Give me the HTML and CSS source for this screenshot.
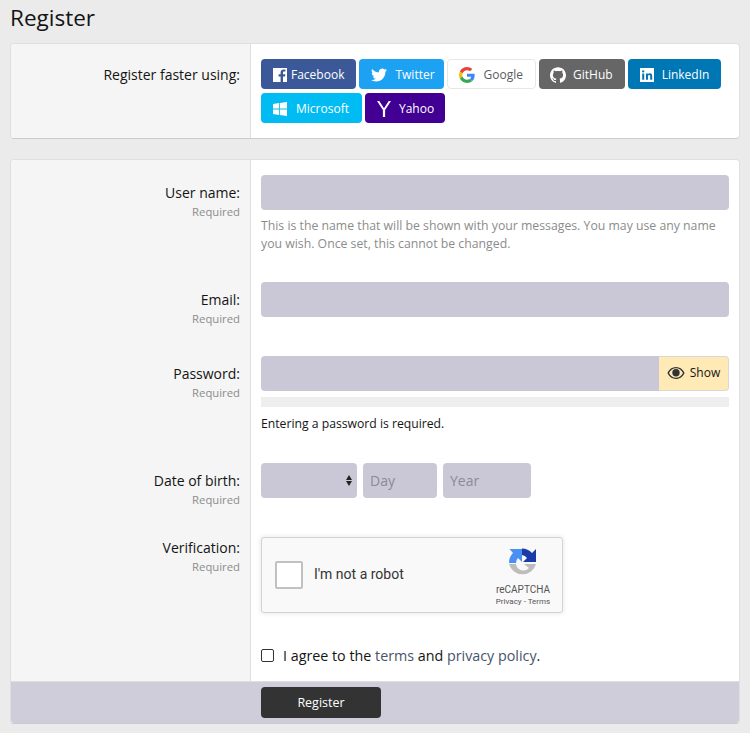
FILE: index.html
```html
<!DOCTYPE html>
<html lang="en">
<head>
  <meta charset="UTF-8">
  <title>Register</title>
  <link rel="stylesheet" href="styles.css">
</head>
<body>
  <h1 class="page-title">Register</h1>

  <div class="block block-auth">
    <div class="row">
      <div class="row-label"><span class="label-text">Register faster using:</span></div>
      <div class="row-body">
        <div class="providers">
          <a class="provider facebook" href="#">
            <svg class="provider-icon" viewBox="0 0 16 16"><path fill="#fff" d="M1 1h14v14h-4V9.6h2l.3-2.4H11V5.8c0-.7.2-1.2 1.2-1.2h1.2V2.5c-.3 0-1-.1-1.800-.1-1.800 0-3 1.100-3 3.100v1.700h-2v2.400h2V15H1z"/></svg>
            Facebook
          </a>
          <a class="provider twitter" href="#">
            <svg class="provider-icon" viewBox="0 0 24 24"><path fill="#fff" d="M23.953 4.57a10 10 0 01-2.825.775 4.958 4.958 0 002.163-2.723c-.951.555-2.005.959-3.127 1.184a4.92 4.92 0 00-8.384 4.482C7.69 8.095 4.067 6.13 1.64 3.162a4.822 4.822 0 00-.666 2.475c0 1.71.87 3.213 2.188 4.096a4.904 4.904 0 01-2.228-.616v.06a4.923 4.923 0 003.946 4.827 4.996 4.996 0 01-2.212.085 4.936 4.936 0 004.604 3.417 9.867 9.867 0 01-6.102 2.105c-.39 0-.779-.023-1.17-.067a13.995 13.995 0 007.557 2.209c9.053 0 13.998-7.496 13.998-13.985 0-.21 0-.42-.015-.63A9.935 9.935 0 0024 4.59z"/></svg>
            Twitter
          </a>
          <a class="provider google" href="#">
            <svg class="provider-icon" viewBox="0 0 48 48">
              <path fill="#EA4335" d="M24 9.5c3.54 0 6.71 1.22 9.21 3.6l6.85-6.85C35.9 2.38 30.47 0 24 0 14.62 0 6.51 5.38 2.56 13.22l7.98 6.19C12.43 13.72 17.74 9.5 24 9.5z"/>
              <path fill="#4285F4" d="M46.98 24.55c0-1.57-.15-3.09-.38-4.55H24v9.02h12.94c-.58 2.96-2.26 5.48-4.78 7.18l7.73 6c4.51-4.18 7.09-10.36 7.09-17.65z"/>
              <path fill="#FBBC05" d="M10.53 28.59c-.48-1.450-.76-2.990-.76-4.590s.27-3.140.76-4.590l-7.980-6.190C.92 16.460 0 20.120 0 24c0 3.880.92 7.540 2.560 10.780l7.970-6.190z"/>
              <path fill="#34A853" d="M24 48c6.48 0 11.93-2.130 15.890-5.810l-7.730-6c-2.150 1.450-4.920 2.300-8.160 2.300-6.260 0-11.570-4.220-13.470-9.910l-7.980 6.190C6.510 42.620 14.620 48 24 48z"/>
            </svg>
            Google
          </a>
          <a class="provider github" href="#">
            <svg class="provider-icon" viewBox="0 0 24 24"><path fill="#fff" d="M12 .297c-6.63 0-12 5.373-12 12 0 5.303 3.438 9.8 8.205 11.385.6.113.82-.258.82-.577 0-.285-.01-1.04-.015-2.04-3.338.724-4.042-1.61-4.042-1.61C4.422 18.07 3.633 17.7 3.633 17.7c-1.087-.744.084-.729.084-.729 1.205.084 1.838 1.236 1.838 1.236 1.07 1.835 2.809 1.305 3.495.998.108-.776.417-1.305.76-1.605-2.665-.3-5.466-1.332-5.466-5.93 0-1.31.465-2.38 1.235-3.22-.135-.303-.54-1.523.105-3.176 0 0 1.005-.322 3.3 1.23.96-.267 1.98-.399 3-.405 1.02.006 2.04.138 3 .405 2.28-1.552 3.285-1.23 3.285-1.23.645 1.653.24 2.873.12 3.176.765.84 1.23 1.91 1.23 3.22 0 4.61-2.805 5.625-5.475 5.92.42.36.81 1.096.81 2.22 0 1.606-.015 2.896-.015 3.286 0 .315.21.69.825.57C20.565 22.092 24 17.592 24 12.297c0-6.627-5.373-12-12-12"/></svg>
            GitHub
          </a>
          <a class="provider linkedin" href="#">
            <svg class="provider-icon" viewBox="0 0 16 16"><path fill="#fff" fill-rule="evenodd" d="M1 1h14v14H1zM3.200 6.500v6.300h2V6.500zM4.200 3.300a1.150 1.150 0 100 2.300 1.150 1.150 0 000-2.300zM7 6.500v6.300h2V9.700c0-.9.300-1.600 1.200-1.600s1 .8 1 1.600v3.100h2V9.300c0-1.900-.7-3-2.400-3-1 0-1.600.5-1.900 1V6.500z"/></svg>
            LinkedIn
          </a>
          <a class="provider microsoft" href="#">
            <svg class="provider-icon" viewBox="0 0 16 16"><path fill="#fff" d="M1 3l6-.9v5.500H1zM7.800 2l7.200-1v6.600H7.800zM1 8.400h6v5.500L1 13zM7.800 8.400H15V15l-7.200-1z"/></svg>
            Microsoft
          </a>
          <a class="provider yahoo" href="#">
            <svg class="provider-icon" viewBox="0 0 16 18"><path fill="#fff" d="M1 1h2.300l4.700 7.200L12.700 1H15L9.100 10v7H6.900v-7z"/></svg>
            Yahoo
          </a>
        </div>
      </div>
    </div>
  </div>

  <form class="block block-form">
    <div class="row">
      <div class="row-label">
        <span class="label-text">User name:</span>
        <span class="label-hint">Required</span>
      </div>
      <div class="row-body">
        <input class="field" type="text">
        <p class="explain">This is the name that will be shown with your messages. You may use any name you wish. Once set, this cannot be changed.</p>
      </div>
    </div>

    <div class="row">
      <div class="row-label">
        <span class="label-text">Email:</span>
        <span class="label-hint">Required</span>
      </div>
      <div class="row-body row-email">
        <input class="field" type="email">
      </div>
    </div>

    <div class="row">
      <div class="row-label">
        <span class="label-text">Password:</span>
        <span class="label-hint">Required</span>
      </div>
      <div class="row-body">
        <div class="input-group">
          <input class="field field-group" type="password">
          <button class="show-btn" type="button">
            <svg class="eye" viewBox="0 0 18 14"><path fill="#333" fill-rule="evenodd" d="M9 1C5.200 1 2.100 3.200.4 7c1.700 3.800 4.800 6 8.600 6s6.900-2.200 8.600-6C15.900 3.200 12.800 1 9 1zM9 2.300c3 0 5.500 1.700 7 4.700-1.500 3-4 4.700-7 4.700S3.500 10 2 7c1.500-3 4-4.700 7-4.700z"/><circle cx="9" cy="6.800" r="3.700" fill="#333"/></svg>
            Show
          </button>
        </div>
        <div class="meter"></div>
        <p class="meter-text">Entering a password is required.</p>
      </div>
    </div>

    <div class="row">
      <div class="row-label">
        <span class="label-text">Date of birth:</span>
        <span class="label-hint">Required</span>
      </div>
      <div class="row-body">
        <div class="dob">
          <div class="select-wrap"><select class="field"><option></option></select></div>
          <input class="field dob-day" type="text" placeholder="Day">
          <input class="field dob-year" type="text" placeholder="Year">
        </div>
      </div>
    </div>

    <div class="row">
      <div class="row-label">
        <span class="label-text">Verification:</span>
        <span class="label-hint">Required</span>
      </div>
      <div class="row-body row-captcha">
        <div class="captcha">
          <span class="captcha-box"></span>
          <span class="captcha-text">I'm not a robot</span>
          <div class="captcha-brand">
            <svg class="captcha-logo" viewBox="0 0 30 32">
              <path fill="#bdbdbd" d="M1 17h7a7.500 7.500 0 0 0 13 4l-5-4h12a14 14 0 0 1-27 0z"/>
              <path fill="#4a90f2" d="M1 16A14 14 0 0 1 5 6L1.500 2H14v13l-4-4a7 7 0 0 0-2 5z"/>
              <path fill="#1c3aa9" d="M14 1.500A14 14 0 0 1 24 6l4-4v13H15l4-4a7 7 0 0 0-5-3z"/>
            </svg>
            <span class="captcha-name">reCAPTCHA</span>
            <span class="captcha-links">Privacy - Terms</span>
          </div>
        </div>
      </div>
    </div>

    <div class="row">
      <div class="row-label"></div>
      <div class="row-body">
        <label class="agree">
          <input class="agree-check" type="checkbox">
          <span>I agree to the <a href="#">terms</a> and <a href="#">privacy policy</a>.</span>
        </label>
      </div>
    </div>

    <div class="form-footer">
      <button class="submit-btn" type="submit">Register</button>
    </div>
  </form>
</body>
</html>
```

FILE: styles.css
```css
* {
  box-sizing: border-box;
}

body {
  margin: 0;
  padding: 0 10px;
  background: #ebebeb;
  color: #141414;
  font-family: "Open Sans", "Noto Sans", sans-serif;
  font-size: 14px;
  line-height: 20px;
}

a {
  text-decoration: none;
}

.page-title {
  margin: 0;
  height: 43px;
  padding-top: 2px;
  font-size: 22.5px;
  line-height: 32px;
  font-weight: 400;
}

.block {
  background: #fff;
  border: 1px solid #dfdfdf;
  border-bottom-color: #cbcbcb;
  border-radius: 4px;
  overflow: hidden;
}

.block-form {
  margin-top: 20px;
}

.row {
  display: flex;
}

.row-label {
  flex: 0 0 240px;
  padding: 13px 10px 6px 0;
  background: #f5f5f5;
  border-right: 1px solid #dfdfdf;
  text-align: right;
}

.block-auth .row-label {
  padding-top: 11px;
}

.label-text {
  display: block;
  padding-top: 10px;
}

.label-hint {
  display: block;
  font-size: 11.300px;
  line-height: 18px;
  color: #8c8c8c;
}

.row-body {
  flex: 1;
  padding: 15px 10px;
}

.row-email {
  padding-bottom: 24px;
}

.row-captcha {
  padding-top: 22px;
  padding-bottom: 17px;
}

.providers {
  display: flex;
  flex-wrap: wrap;
  gap: 4px 3px;
}

.provider {
  display: flex;
  align-items: center;
  height: 30px;
  padding: 2px 12px 0 11px;
  border-radius: 4px;
  color: #fff;
  font-size: 12px;
}

.provider-icon {
  width: 16px;
  height: 16px;
  margin-right: 7px;
}

.facebook { background: #3b5998; }
.facebook .provider-icon { margin-right: 3px; }
.twitter { background: #1da1f2; padding: 2px 9px 0 12px; }
.twitter .provider-icon { margin-right: 8px; }
.google { background: #fff; color: #5c5c5c; border: 1px solid #e7e7e7; }
.google .provider-icon { margin-right: 9px; }
.github { background: #666; }
.linkedin { background: #0077b5; }
.microsoft { background: #00bcf2; padding-right: 13px; }
.microsoft .provider-icon { margin-right: 8px; }
.yahoo { background: #410093; padding-right: 11px; }
.yahoo .provider-icon { height: 18px; }

.field {
  display: block;
  width: 100%;
  height: 35px;
  padding: 0 7px;
  background: #cac8d6;
  border: 0;
  border-radius: 4px;
  color: #141414;
  font: inherit;
  font-size: 14px;
}

.field::placeholder {
  color: #8a8a98;
}

.explain {
  margin: 7px 0 -1px;
  font-size: 12.270px;
  line-height: 18px;
  color: #8c8c8c;
}

.input-group {
  display: flex;
}

.field-group {
  flex: 1;
  border-radius: 4px 0 0 4px;
}

.show-btn {
  display: flex;
  align-items: center;
  justify-content: center;
  gap: 5px;
  flex: 0 0 70px;
  padding: 0 0 2px;
  background: #ffeab6;
  border: 1px solid #d8d8d8;
  border-left: 0;
  border-radius: 0 4px 4px 0;
  color: #141414;
  font: inherit;
  font-size: 12px;
}

.eye {
  width: 18px;
  height: 14px;
}

.meter {
  height: 10px;
  margin-top: 6px;
  background: #eeeeee;
}

.meter-text {
  margin: 7px 0 -1px;
  font-size: 12.200px;
  line-height: 20px;
}

.dob {
  display: flex;
  gap: 6px;
}

.select-wrap {
  position: relative;
  flex: 0 0 96px;
}

.select-wrap select {
  appearance: none;
}

.select-wrap::before,
.select-wrap::after {
  content: "";
  position: absolute;
  right: 5px;
  width: 0;
  height: 0;
  border: 3.500px solid transparent;
  pointer-events: none;
}

.select-wrap::before {
  top: 12px;
  border-top: 0;
  border-bottom: 5px solid #222;
}

.select-wrap::after {
  top: 18px;
  border-bottom: 0;
  border-top: 5px solid #222;
}

.dob-day {
  width: 74px;
}

.dob-year {
  width: 88px;
}

.captcha {
  display: flex;
  align-items: center;
  width: 302px;
  height: 76px;
  padding-left: 13px;
  background: #f9f9f9;
  border: 1px solid #d3d3d3;
  border-radius: 3px;
  box-shadow: 0 0 4px 1px rgba(0, 0, 0, 0.08);
  font-family: Roboto, sans-serif;
}

.captcha-box {
  width: 28px;
  height: 28px;
  background: #fff;
  border: 2px solid #c1c1c1;
  border-radius: 2px;
}

.captcha-text {
  margin: 0 0 2px 11px;
  font-size: 14px;
  color: #333;
}

.captcha-brand {
  display: flex;
  flex-direction: column;
  align-items: center;
  margin-left: auto;
  width: 70px;
  margin-right: 4px;
  padding-top: 5px;
  color: #555;
}

.captcha-logo {
  width: 30px;
  height: 32px;
}

.captcha-name {
  margin-top: 4px;
  font-size: 10px;
  line-height: 13px;
}

.captcha-links {
  font-size: 8px;
  line-height: 12px;
}

.agree {
  display: flex;
  align-items: center;
  gap: 9px;
  font-size: 14.300px;
  line-height: 21px;
}

.agree a {
  color: #47536b;
}

.agree-check {
  appearance: none;
  width: 13px;
  height: 13px;
  margin: 0;
  background: #fff;
  border: 1.500px solid #333;
  border-radius: 2px;
}

.form-footer {
  height: 42px;
  padding: 5px 0 0 250px;
  background: #cfcdda;
  border-top: 1px solid #dfdfdf;
}

.submit-btn {
  display: block;
  width: 120px;
  height: 31px;
  background: #333;
  border: 0;
  border-radius: 4px;
  color: #fff;
  font: inherit;
  font-size: 12.500px;
}
```
